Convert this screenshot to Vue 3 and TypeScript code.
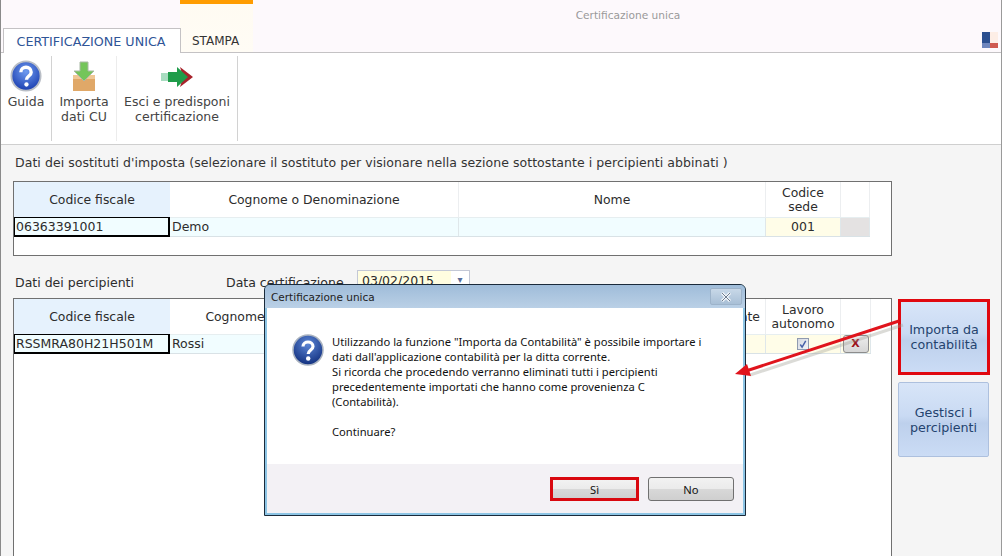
<script setup lang="ts">
type Col = { label: string; width: number; cls?: string }

const sostitutiCols: Col[] = [
  { label: 'Codice fiscale', width: 156, cls: 'key' },
  { label: 'Cognome o Denominazione', width: 289 },
  { label: 'Nome', width: 307 },
  { label: 'Codice sede', width: 75 },
  { label: '', width: 29 },
]

const percipientiCols: Col[] = [
  { label: 'Codice fiscale', width: 156, cls: 'key' },
  { label: 'Cognome o Denominazione', width: 243 },
  { label: 'Nome', width: 250 },
  { label: 'Residente', width: 103, cls: 'end' },
  { label: 'Lavoro autonomo', width: 75 },
  { label: '', width: 30 },
]

function tracks(cols: Col[]): string {
  return cols.map((c) => c.width + 'px').join(' ')
}

const messageLines = [
  'Utilizzando la funzione "Importa da Contabilità" è possibile importare i',
  "dati dall'applicazione contabilità per la ditta corrente.",
  'Si ricorda che procedendo verranno eliminati tutti i percipienti',
  'precedentemente importati che hanno come provenienza C',
  '(Contabilità).',
  '\u00a0',
  'Continuare?',
]
</script>

<template>
  <div class="app">
    <header class="top">
      <div class="accent"></div>
      <div class="title">Certificazione unica</div>
      <div class="tabs">
        <div class="tab active">CERTIFICAZIONE UNICA</div>
        <div class="tab">STAMPA</div>
        <svg class="logo" width="16" height="16" viewBox="0 0 16 16">
          <rect width="8" height="11" fill="#2b4f8f" />
          <rect y="11" width="8" height="5" fill="#6e86bd" />
          <rect x="8" width="8" height="11" fill="#fdeee6" />
          <rect x="8" y="11" width="8" height="5" fill="#cf5a50" />
        </svg>
      </div>
    </header>

    <nav class="ribbon">
      <div class="group guida">
        <svg width="32" height="32" viewBox="0 0 34 34">
          <defs>
            <radialGradient id="help" cx="50%" cy="35%" r="65%">
              <stop offset="0" stop-color="#6f9bf0" />
              <stop offset="1" stop-color="#1c3fb0" />
            </radialGradient>
          </defs>
          <circle cx="17" cy="17" r="15.5" fill="url(#help)" stroke="#b9bec6" stroke-width="2" />
          <path d="M11.5 13c0-7 11-7 11 0 0 4-5 4-5 8" fill="none" stroke="#fff" stroke-width="3.6" />
          <circle cx="17.5" cy="26" r="2.3" fill="#fff" />
        </svg>
        <span>Guida</span>
      </div>
      <div class="group importa">
        <svg width="24" height="31" viewBox="0 0 24 31">
          <path d="M1 14h22v16H1z" fill="#e0a868" />
          <path d="M1 14h22v4H1z" fill="#f0c795" />
          <path d="M8 1h8v9h6L12 20 2 10h6z" fill="#74c55a" stroke="#a9b9a4" />
        </svg>
        <span>Importa<br />dati CU</span>
      </div>
      <div class="group esci">
        <svg width="34" height="20" viewBox="0 0 34 20">
          <path d="M20 0l13 10-13 10 3-10z" fill="#a8232c" />
          <path d="M1 6h8v8H1z" fill="#a8dcc0" />
          <path d="M8 5h9V0l11 10-11 10v-5H8z" fill="#1f9c4a" />
        </svg>
        <span>Esci e predisponi<br />certificazione</span>
      </div>
    </nav>

    <main class="content">
      <section class="main-col">
        <p class="caption">
          Dati dei sostituti d'imposta (selezionare il sostituto per visionare nella sezione sottostante i percipienti abbinati )
        </p>
        <div class="grid-box first">
          <div class="grid-row head" :style="{ gridTemplateColumns: tracks(sostitutiCols) }">
            <div v-for="col in sostitutiCols" :key="col.label" class="th" :class="col.cls">{{ col.label }}</div>
          </div>
          <div class="grid-row body" :style="{ gridTemplateColumns: tracks(sostitutiCols) }">
            <div class="td current">06363391001</div>
            <div class="td">Demo</div>
            <div class="td"></div>
            <div class="td yellow">001</div>
            <div class="td off"></div>
          </div>
        </div>

        <div class="filter">
          <span class="filter-label">Dati dei percipienti</span>
          <span class="filter-date">Data certificazione</span>
          <div class="date-field">
            <span class="date-value">03/02/2015</span>
            <span class="date-drop">▾</span>
          </div>
        </div>

        <div class="grid-box second">
          <div class="grid-row head" :style="{ gridTemplateColumns: tracks(percipientiCols) }">
            <div v-for="col in percipientiCols" :key="col.label" class="th" :class="col.cls">{{ col.label }}</div>
          </div>
          <div class="grid-row body" :style="{ gridTemplateColumns: tracks(percipientiCols) }">
            <div class="td current">RSSMRA80H21H501M</div>
            <div class="td">Rossi</div>
            <div class="td"></div>
            <div class="td yellow"></div>
            <div class="td yellow">
              <span class="check">
                <svg width="11" height="11" viewBox="0 0 11 11">
                  <path d="M2.5 5.5l2 3L8.5 1.5" fill="none" stroke="#4660a8" stroke-width="1.6" />
                </svg>
              </span>
            </div>
            <div class="td yellow"><span class="del">X</span></div>
          </div>
        </div>
      </section>

      <aside class="actions">
        <button class="action marked">Importa da<br />contabilità</button>
        <button class="action">Gestisci i<br />percipienti</button>
      </aside>
    </main>

    <div class="dialog">
      <div class="dialog-title">
        <span>Certificazione unica</span>
        <span class="close">
          <svg width="14" height="10" viewBox="0 0 14 10">
            <path d="M3 1l8 8M11 1L3 9" fill="none" stroke="#f2f5f9" stroke-width="3" />
            <path d="M3 1l8 8M11 1L3 9" fill="none" stroke="#6d7c8e" stroke-width="1" />
          </svg>
        </span>
      </div>
      <div class="dialog-body">
        <svg class="dialog-icon" width="32" height="32" viewBox="0 0 32 32">
          <defs>
            <radialGradient id="q" cx="50%" cy="30%" r="70%">
              <stop offset="0" stop-color="#5d87d6" />
              <stop offset="1" stop-color="#12307f" />
            </radialGradient>
          </defs>
          <circle cx="16" cy="16" r="15" fill="url(#q)" stroke="#aab3c0" stroke-width="1.5" />
          <path d="M11 12.5c0-6 10-6 10 0 0 3.5-4.8 3.5-4.8 7.5" fill="none" stroke="#fff" stroke-width="3.2" />
          <circle cx="16.2" cy="24.5" r="2.2" fill="#fff" />
        </svg>
        <div class="message">
          <div v-for="(line, idx) in messageLines" :key="idx">{{ line }}</div>
        </div>
      </div>
      <div class="dialog-foot">
        <button class="win-btn yes">Sì</button>
        <button class="win-btn">No</button>
      </div>
    </div>

    <svg class="pointer" width="1002" height="556" viewBox="0 0 1002 556">
      <path d="M903 325L750 375" stroke="#9a9a90" stroke-width="3" opacity="0.35" />
      <path d="M899 321L746 371" stroke="#e0141c" stroke-width="3" />
      <path d="M735 374l12-10 4 12z" fill="#e0141c" />
    </svg>
  </div>
</template>

<style>
html,
body {
  margin: 0;
  padding: 0;
  background: #f5f5f5;
}
</style>

<style scoped>
.app {
  position: relative;
  width: 1002px;
  height: 556px;
  overflow: hidden;
  box-sizing: border-box;
  border-left: 1px solid #8a8a8a;
  border-right: 1px solid #9a9a9a;
  background: #f5f5f5;
  color: #2c2c2c;
  font-family: "DejaVu Sans", sans-serif;
  font-size: 12.5px;
  display: flex;
  flex-direction: column;
}

.top {
  position: relative;
  height: 53px;
  flex: none;
  background: #fdf9fc;
  display: flex;
  flex-direction: column;
  justify-content: flex-end;
}

.accent {
  position: absolute;
  left: 179px;
  top: 0;
  width: 73px;
  height: 52px;
  background: linear-gradient(#fffbf2, #fffcf5);
  border-top: 4px solid #ff9c00;
  box-sizing: border-box;
}

.title {
  position: absolute;
  left: 0;
  right: 0;
  top: 9px;
  text-align: center;
  padding-left: 254px;
  box-sizing: border-box;
  font-size: 10.6px;
  color: #9a9a9a;
}

.tabs {
  position: relative;
  display: flex;
  align-items: flex-end;
  height: 25px;
  padding-left: 2px;
  border-bottom: 1px solid #c4c2c4;
}

.tab {
  height: 24px;
  line-height: 26px;
  padding: 0 11px;
  font-size: 12px;
  color: #333;
  box-sizing: border-box;
}

.tab.active {
  width: 178px;
  height: 25px;
  margin-bottom: -1px;
  padding: 0 2px 0 0;
  text-align: center;
  font-size: 12.7px;
  color: #2f5597;
  background: #fff;
  border: 1px solid #c4c2c4;
  border-bottom: 0;
}

.logo {
  margin-left: auto;
  margin-right: 3px;
  margin-bottom: 4px;
}

.ribbon {
  height: 92px;
  flex: none;
  display: flex;
  box-sizing: border-box;
  padding: 3px 0 3px 2px;
  background: #fff;
  border-bottom: 1px solid #cfcfcf;
}

.group {
  display: flex;
  flex-direction: column;
  align-items: center;
  text-align: center;
  line-height: 15px;
  font-size: 12.5px;
  color: #444;
  box-sizing: border-box;
  border-right: 1px solid #d2d2d2;
}

.guida {
  width: 49px;
  padding: 4px 2px 0 0;
}

.guida span {
  margin-top: 2px;
}

.importa {
  width: 65px;
  padding-top: 5px;
  border-right-color: #ececec;
}

.importa svg {
  margin-bottom: 2px;
}

.esci {
  width: 121px;
  padding-top: 11px;
}

.esci svg {
  margin-bottom: 7px;
}

.content {
  flex: 1;
  display: flex;
  padding: 10px 0 0 12px;
  min-height: 0;
}

.main-col {
  width: 879px;
  flex: none;
}

.caption {
  margin: 0 0 10px 2px;
  line-height: 16px;
  white-space: nowrap;
  font-size: 12.5px;
  letter-spacing: 0.06px;
  color: #333;
}

.grid-box {
  width: 879px;
  box-sizing: border-box;
  border: 1px solid #707070;
  background: #fff;
}

.first {
  height: 75px;
}

.second {
  height: 280px;
  margin-top: 2px;
}

.grid-row {
  display: grid;
  width: fit-content;
}

.head {
  height: 35px;
}

.th {
  display: flex;
  align-items: center;
  justify-content: center;
  text-align: center;
  font-size: 12.4px;
  line-height: 14px;
  padding: 0 8px;
  box-sizing: border-box;
  border-right: 1px solid #eceef0;
  white-space: normal;
}

.th.key {
  background: #e6f2fd;
  border-right: 0;
}

.th.end {
  justify-content: flex-end;
  padding: 0 5px 0 0;
}

.body {
  height: 20px;
  background: #f1fdff;
  border-top: 1px solid #e6eef0;
  border-bottom: 1px solid #d9e2e6;
  box-sizing: border-box;
}

.td {
  line-height: 18px;
  padding-left: 2px;
  white-space: nowrap;
  box-sizing: border-box;
  border-right: 1px solid #dfe7ea;
}

.current {
  margin: -1px 0 -1px 0;
  padding-left: 1px;
  line-height: 17px;
  border: 2px solid #000;
  border-width: 1px 2px 2px 1px;
  background: #f1fdff;
}

.yellow {
  display: flex;
  align-items: center;
  justify-content: center;
  padding: 0;
  background: #fffde8;
}

.off {
  background: #e4e2e2;
}

.filter {
  display: flex;
  align-items: flex-end;
  height: 26px;
  margin-top: 14px;
  padding-bottom: 4px;
  box-sizing: border-box;
}

.filter-label {
  width: 211px;
  margin-left: 2px;
  line-height: 18px;
}

.filter-date {
  width: 131px;
  line-height: 18px;
}

.date-field {
  width: 113px;
  height: 28px;
  box-sizing: border-box;
  border: 1px solid #c3c8d6;
  background: #fff;
  display: flex;
  align-self: flex-start;
}

.date-value {
  flex: 1;
  background: #fffde0;
  padding: 1px 0 0 4px;
  line-height: 18px;
}

.date-drop {
  width: 18px;
  text-align: center;
  color: #5a6f9c;
  font-size: 10px;
  line-height: 18px;
}

.check {
  width: 12px;
  height: 12px;
  display: flex;
  box-sizing: border-box;
  border: 1px solid #8f9ab0;
  background: linear-gradient(135deg, #d5d9e2, #f2f4f8);
}

.del {
  width: 26px;
  height: 18px;
  box-sizing: border-box;
  border: 1px solid #8c8c8c;
  border-radius: 3px;
  background: linear-gradient(#ececec, #d6d6d6);
  color: #9c1018;
  font-weight: 700;
  font-size: 11px;
  line-height: 16px;
  text-align: center;
}

.actions {
  margin-left: 6px;
  padding-top: 144px;
  display: flex;
  flex-direction: column;
  gap: 7px;
}

.action {
  width: 92px;
  height: 76px;
  padding: 0;
  box-sizing: border-box;
  border: 1px solid #adc0de;
  border-radius: 2px;
  background: linear-gradient(#d8e5f8 0%, #c9daf3 45%, #bdd0ec 55%, #cbdcf5 100%);
  color: #24436e;
  font-family: inherit;
  font-size: 12.7px;
  line-height: 15px;
}

.action.marked {
  border: 3px solid #e0080f;
  border-radius: 0;
}

.action:not(.marked) {
  width: 91px;
  height: 75px;
}

.dialog {
  position: absolute;
  left: 263px;
  top: 284px;
  width: 482px;
  height: 232px;
  box-sizing: border-box;
  border: 1px solid #1a2a3a;
  border-radius: 6px 6px 0 0;
  padding: 0 2px 2px;
  background: #8cc4e4;
  display: flex;
  flex-direction: column;
  font-family: "Noto Sans", sans-serif;
  font-size: 11.2px;
}

.dialog-title {
  height: 23px;
  flex: none;
  margin: 0 -2px;
  padding: 0 3px 0 6px;
  display: flex;
  align-items: center;
  justify-content: space-between;
  border-radius: 5px 5px 0 0;
  background: linear-gradient(#9fbcd9, #bad0e6);
  color: #222;
  font-family: "DejaVu Sans", sans-serif;
  font-size: 10.5px;
}

.close {
  width: 30px;
  height: 15px;
  display: flex;
  align-items: center;
  justify-content: center;
  border: 1px solid #9db3ca;
  background: linear-gradient(#c8d8e8, #a8bfd6);
  border-radius: 2px;
}

.dialog-body {
  flex: 1;
  display: flex;
  background: #fff;
  padding: 26px 0 0 25px;
  gap: 8px;
}

.dialog-icon {
  flex: none;
}

.message {
  color: #111;
  line-height: 15px;
  white-space: nowrap;
}

.dialog-foot {
  height: 49px;
  flex: none;
  display: flex;
  justify-content: flex-end;
  align-items: flex-start;
  gap: 9px;
  padding: 13px 9px 0 0;
  box-sizing: border-box;
  background: #f3f1f5;
}

.win-btn {
  width: 86px;
  height: 24px;
  padding: 0;
  box-sizing: border-box;
  border: 1px solid #707070;
  border-radius: 3px;
  background: linear-gradient(#f2f2f2 0%, #ebebeb 48%, #d8d8d8 52%, #cfcfcf 100%);
  color: #111;
  font-family: inherit;
  font-size: 11.2px;
}

.win-btn.yes {
  width: 89px;
  border: 3px solid #d9080f;
  border-radius: 0;
}

.pointer {
  position: absolute;
  left: -1px;
  top: 0;
  pointer-events: none;
}
</style>
